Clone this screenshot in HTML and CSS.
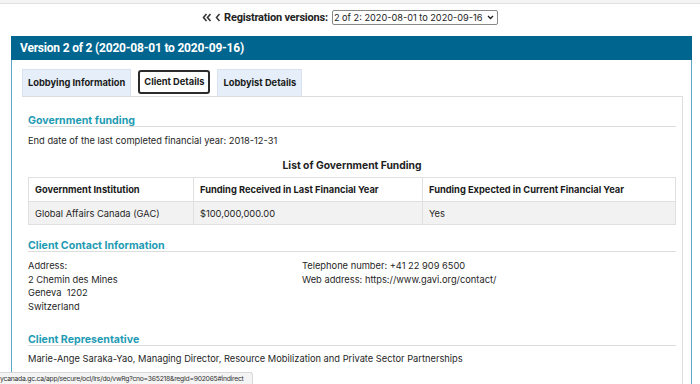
FILE: index.html
```html
<!DOCTYPE html>
<html>
<head>
  <title>Registration - Client Details</title>
  <link rel="stylesheet" href="styles.css">
</head>
<body>
  <div class="topstrip"></div>

  <div class="versions">
    <svg class="arrow" width="10" height="9" viewBox="0 0 10 9">
      <path d="M4.5 1 L1.5 4.5 L4.5 8 M8.5 1 L5.5 4.5 L8.5 8" fill="none" stroke="#333" stroke-width="1.6"/>
    </svg>
    <svg class="arrow" width="6" height="9" viewBox="0 0 6 9">
      <path d="M4.5 1 L1.5 4.5 L4.5 8" fill="none" stroke="#333" stroke-width="1.5"/>
    </svg>
    <label for="version">Registration versions:</label>
    <span class="select-wrap">
      <select id="version">
        <option>2 of 2: 2020-08-01 to 2020-09-16</option>
      </select>
      <svg class="caret" width="7" height="5" viewBox="0 0 7 5">
        <path d="M1 1 L3.5 3.5 L6 1" fill="none" stroke="#222" stroke-width="1.4"/>
      </svg>
    </span>
  </div>

  <div class="panel">
    <div class="panel-heading">Version 2 of 2 (2020-08-01 to 2020-09-16)</div>
    <div class="panel-body">
      <ul class="tabs">
        <li class="tab">Lobbying Information</li>
        <li class="tab active">Client Details</li>
        <li class="tab">Lobbyist Details</li>
      </ul>

      <div class="tab-content">
        <h2>Government funding</h2>
        <p>End date of the last completed financial year: 2018-12-31</p>

        <div class="caption">List of Government Funding</div>
        <table>
          <tr>
            <th class="col1">Government Institution</th>
            <th class="col2">Funding Received in Last Financial Year</th>
            <th>Funding Expected in Current Financial Year</th>
          </tr>
          <tr class="odd">
            <td>Global Affairs Canada (GAC)</td>
            <td>$100,000,000.00</td>
            <td>Yes</td>
          </tr>
        </table>

        <h2>Client Contact Information</h2>
        <div class="contact">
          <div class="contact-col">
            Address:<br>
            2 Chemin des Mines<br>
            Geneva&nbsp; 1202<br>
            Switzerland
          </div>
          <div class="contact-col">
            Telephone number: +41 22 909 6500<br>
            Web address: https://www.gavi.org/contact/
          </div>
        </div>

        <h2>Client Representative</h2>
        <p class="rep">Marie-Ange Saraka-Yao, Managing Director, Resource Mobilization and Private Sector Partnerships</p>
      </div>
    </div>
  </div>

  <div class="statusbar">ycanada.gc.ca/app/secure/ocl/lrs/do/vwRg?cno=365218&amp;regId=902065#indirect</div>
</body>
</html>
```

FILE: styles.css
```css
html, body {
  height: 384px;
}

body {
  margin: 0;
  font-family: Inter, "Noto Sans", sans-serif;
  font-size: 9.3px;
  color: #1f1f1f;
  background-color: #ffffff;
  overflow: hidden;
}

.topstrip {
  height: 3px;
  background-color: #f4f4f4;
  border-bottom: 1px solid #e0e0e0;
}

.versions {
  display: flex;
  justify-content: center;
  align-items: center;
  gap: 3px;
  height: 27px;
  font-family: Roboto, sans-serif;
  font-weight: bold;
  font-size: 11px;
  letter-spacing: -0.2px;
  color: #222;
}

.arrow {
  display: block;
}

.versions label {
  margin-right: 1px;
}

.select-wrap {
  position: relative;
  display: block;
}

.versions select {
  display: block;
  appearance: none;
  -webkit-appearance: none;
  font-family: Inter, sans-serif;
  font-size: 9.2px;
  font-weight: normal;
  letter-spacing: 0;
  height: 15px;
  width: 166px;
  padding: 0 12px 0 1px;
  border: 1px solid #888;
  border-radius: 2px;
  background-color: #fff;
  color: #222;
}

.caret {
  position: absolute;
  right: 4px;
  top: 5px;
  pointer-events: none;
}

.panel {
  margin: 5px 8px 0 11px;
}

.panel-heading {
  height: 24px;
  line-height: 24px;
  padding: 0 9px;
  background-color: #00668f;
  color: #ffffff;
  font-family: Roboto, sans-serif;
  font-weight: bold;
  font-size: 12px;
  letter-spacing: -0.2px;
}

.panel-body {
  border-left: 1px solid #5aa7c9;
  border-right: 1px solid #5aa7c9;
  padding: 9px 8px 0 10px;
}

.tabs {
  display: flex;
  gap: 7px;
  list-style: none;
  margin: 0;
  padding: 0;
  height: 27px;
}

.tab {
  padding: 0 5px;
  line-height: 26px;
  font-weight: bold;
  color: #1a1a1a;
  background-color: #e6eff9;
  border: 1px solid #d8e3ef;
  border-bottom: none;
}

.tab.active {
  padding: 0 4px;
  background-color: #ffffff;
  border: 2px solid #2b2b2b;
  border-radius: 3px;
  line-height: 20px;
  height: 20px;
  margin-top: 1px;
}

.tab-content {
  box-sizing: border-box;
  height: 288px;
  border-top: 1px solid #dddddd;
  border-right: 1px solid #dddddd;
  padding: 18px 6px 0 6px;
}

h2 {
  margin: 0;
  font-size: 10.6px;
  line-height: 11px;
  color: #1f9bb4;
  border-bottom: 1px solid #dddddd;
}

p {
  margin: 7px 0 0;
  line-height: 13px;
}

.caption {
  text-align: center;
  font-weight: bold;
  font-size: 10.3px;
  color: #222;
  margin-top: 11px;
  line-height: 14px;
}

table {
  width: 100%;
  border-collapse: collapse;
  margin-top: 5px;
  margin-bottom: 15px;
}

th, td {
  border: 1px solid #e0e0e0;
  text-align: left;
  padding: 0 6px;
  height: 22px;
}

th {
  color: #1a1a1a;
  height: 23px;
}

.col1 {
  width: 152px;
}

.col2 {
  width: 216px;
}

.odd td {
  background-color: #f2f2f2;
}

.contact {
  display: flex;
  box-sizing: border-box;
  padding-top: 7px;
  line-height: 13.5px;
  height: 82px;
}

.contact-col {
  width: 274px;
}

.rep {
  margin-top: 6px;
}

.statusbar {
  position: absolute;
  left: 0;
  bottom: 0;
  width: 252px;
  height: 11px;
  line-height: 11px;
  font-size: 6.8px;
  letter-spacing: -0.25px;
  white-space: nowrap;
  overflow: hidden;
  background-color: #f4f4f4;
  border-top: 1px solid #d8d8d8;
  border-right: 1px solid #d8d8d8;
  border-top-right-radius: 3px;
  color: #333;
}
```
